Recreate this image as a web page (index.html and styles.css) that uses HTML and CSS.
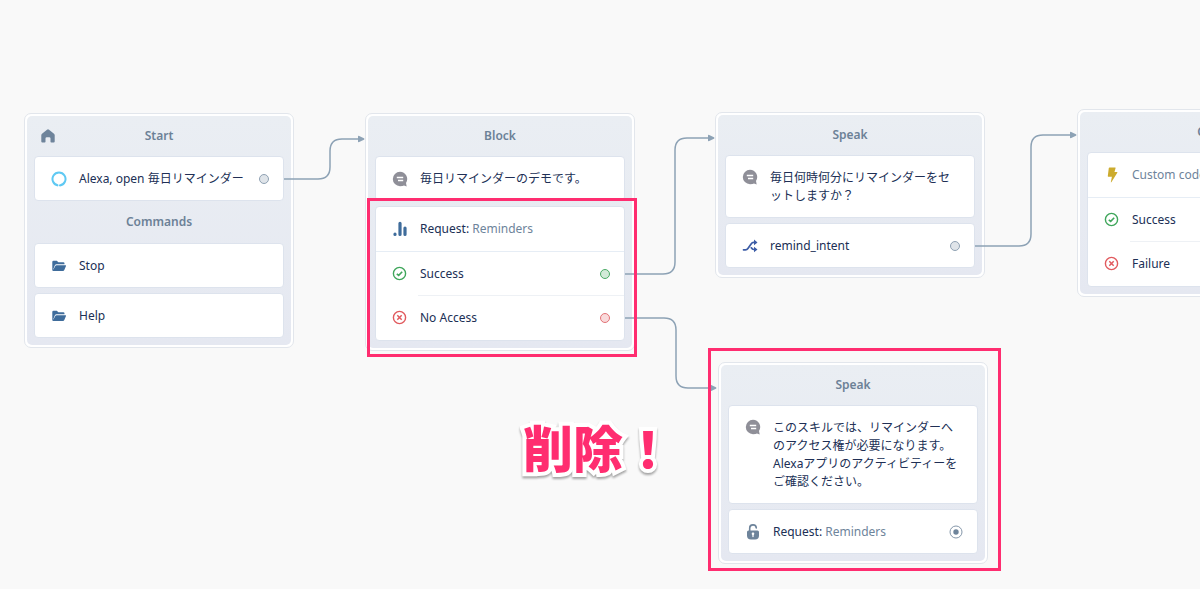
FILE: index.html
```
<!DOCTYPE html>
<html lang="ja">
<head>
  <meta charset="utf-8">
  <title>Skill Canvas</title>
  <link rel="stylesheet" href="styles.css">
</head>
<body>
  <!-- shared icons -->
  <svg class="defs" aria-hidden="true">
    <symbol id="speak" viewBox="0 0 16 16">
      <path fill="#8f8f98" d="M8 .800a7.200 7.200 0 1 0 0 14.400q3 0 4-.6l2.700.9-.7-3.600A7.200 7.200 0 0 0 8 .800z"/>
      <path stroke="#fff" stroke-width="1.500" d="M4.800 6.500h6.400M6 9.500h5.200"/>
    </symbol>
    <symbol id="folder" viewBox="0 0 16 16">
      <path fill="#3f6c9b" d="M1.300 12V4q0-1.200 1.200-1.200h3.300l1.500 1.500h5q1.200 0 1.200 1.200v.7H5.500q-1 0-1.500.9L2.300 11v.8L4.300 8q.3-.7 1.200-.7h9q.8 0 .5.800l-1.700 4q-.4.900-1.300.9H2.300q-1 0-1-1z"/>
    </symbol>
    <symbol id="ok" viewBox="0 0 16 16">
      <g fill="none" stroke="#3fa65b" stroke-width="1.400"><circle cx="7.500" cy="7.500" r="6.100"/><path stroke-width="1.600" d="M4.800 7.800l1.900 1.600 3.500-3.600"/></g>
    </symbol>
    <symbol id="fail" viewBox="0 0 16 16">
      <g fill="none" stroke="#e15a5e" stroke-width="1.400"><circle cx="7.500" cy="7.500" r="6.100"/><path stroke-width="1.500" d="M5.300 5.300l4.400 4.400M9.700 5.300l-4.400 4.400"/></g>
    </symbol>
  </svg>

  <main class="canvas">
    <section class="node node-start">
      <div class="node-body">
        <h2>
          <svg class="home" viewBox="0 0 16 16"><path fill="#6e849b" d="M8 1.300q.5 0 1 .4l5 4q.7.600.7 1.400v6.400q0 1-1 1h-2.400q-.8 0-.8-.8V10.500q0-1.300-1.300-1.300H6.800q-1.300 0-1.300 1.300v3.200q0 .8-.8.800H2.300q-1 0-1-1V7.100q0-.8.7-1.400l5-4q.5-.4 1-.4z"/></svg>
          Start
        </h2>
        <div class="card">
          <div class="row">
            <svg class="icon" viewBox="0 0 16 16"><path fill="none" stroke="#5fc9f3" stroke-width="2" d="M7.200 14.400a6.500 6.500 0 1 1 1.600 0l-.5.600"/></svg>
            <span class="text">Alexa, open 毎日リマインダー</span>
            <span class="port"></span>
          </div>
        </div>
        <h3>Commands</h3>
        <div class="card">
          <div class="row"><svg class="icon"><use href="#folder"/></svg><span class="text">Stop</span></div>
        </div>
        <div class="card">
          <div class="row"><svg class="icon"><use href="#folder"/></svg><span class="text">Help</span></div>
        </div>
      </div>
    </section>

    <section class="node node-block">
      <div class="node-body">
        <h2>Block</h2>
        <div class="card">
          <div class="row"><svg class="icon"><use href="#speak"/></svg><span class="text">毎日リマインダーのデモです。</span></div>
        </div>
        <div class="card">
          <div class="row first">
            <svg class="icon" viewBox="0 0 16 16"><path fill="none" stroke="#3f6c9b" stroke-width="3.200" stroke-linecap="round" d="M3 13.200v.300M8 2.300v11.200M13 7v6.500"/></svg>
            <span class="text">Request: <span class="muted">Reminders</span></span>
          </div>
          <div class="row line"><svg class="icon"><use href="#ok"/></svg><span class="text">Success</span><span class="port green"></span></div>
          <div class="row line-short"><svg class="icon"><use href="#fail"/></svg><span class="text">No Access</span><span class="port red"></span></div>
        </div>
      </div>
    </section>

    <section class="node node-speak">
      <div class="node-body">
        <h2>Speak</h2>
        <div class="card">
          <div class="row tall"><svg class="icon"><use href="#speak"/></svg><span class="text">毎日何時何分にリマインダーをセ<br>ットしますか？</span></div>
        </div>
        <div class="card">
          <div class="row">
            <svg class="icon" viewBox="0 0 16 16"><path fill="none" stroke="#3c5ca6" stroke-width="1.700" stroke-linecap="round" stroke-linejoin="round" d="M1.500 11.800h2q1.500 0 2.400-1.300l3.200-4.600q1-1.500 2.600-1.500h1.800M9.300 9.800q1 1.700 2.500 1.700h1.700"/><path fill="#3c5ca6" d="M12 1.600l3.500 2.800L12 7.200zM12 8.700l3.500 2.800-3.500 2.800z"/></svg>
            <span class="text">remind_intent</span>
            <span class="port"></span>
          </div>
        </div>
      </div>
    </section>

    <section class="node node-code">
      <div class="node-body">
        <h2>Code</h2>
        <div class="card">
          <div class="row first">
            <svg class="icon" viewBox="0 0 16 16"><path fill="#ccab2e" d="M5.500.500h5.700q.6 0 .4.600L10.500 5H13q.7 0 .3.700L7.500 15q-.8 1-.6-.3l1-5H4.300q-.6 0-.5-.600l1-8q.1-.6.700-.6z"/></svg>
            <span class="text muted">Custom code</span>
          </div>
          <div class="row line"><svg class="icon"><use href="#ok"/></svg><span class="text">Success</span><span class="port green"></span></div>
          <div class="row line-short"><svg class="icon"><use href="#fail"/></svg><span class="text">Failure</span><span class="port red"></span></div>
        </div>
      </div>
    </section>

    <section class="node node-permission">
      <div class="node-body">
        <h2>Speak</h2>
        <div class="card">
          <div class="row tall"><svg class="icon"><use href="#speak"/></svg><span class="text">このスキルでは、リマインダーへ<br>のアクセス権が必要になります。<br>Alexaアプリのアクティビティーを<br>ご確認ください。</span></div>
        </div>
        <div class="card">
          <div class="row">
            <svg class="icon" viewBox="0 0 16 16"><path fill="none" stroke="#6e849b" stroke-width="1.600" stroke-linecap="round" d="M4.700 7V4.300a3.300 3.300 0 0 1 6.600-.3"/><path fill="#6e849b" d="M3.500 6.500h9q1.500 0 1.500 1.500v3.500q0 4-4 4H6q-4 0-4-4V8q0-1.500 1.500-1.500z"/><path stroke="#fff" stroke-width="1.300" stroke-linecap="round" d="M8 9.500v3"/><circle cx="8" cy="9.700" r="1.300" fill="#fff"/></svg>
            <span class="text">Request: <span class="muted">Reminders</span></span>
            <svg class="target" viewBox="0 0 14 14"><circle cx="7" cy="7" r="6" fill="none" stroke="#8597aa"/><circle cx="7" cy="7" r="2.700" fill="#6e849b"/></svg>
          </div>
        </div>
      </div>
    </section>

    <svg class="links" aria-hidden="true">
      <defs>
        <marker id="arrow" viewBox="0 0 7 8" markerWidth="7" markerHeight="8" refX="5" refY="4" markerUnits="userSpaceOnUse">
          <path fill="#8da2b5" d="M0 1.500q0-1 1.200-.6L6 3.300q1 .7 0 1.400L1.200 7.100Q0 7.500 0 6.500z"/>
        </marker>
      </defs>
      <path d="M284 179H318Q330 179 330 167V151Q330 139 342 139H363"/>
      <path d="M625 274H663Q675 274 675 262V150Q675 138 687 138H713"/>
      <path d="M625 318H664Q676 318 676 330V376Q676 388 688 388H715"/>
      <path d="M975 246H1019Q1031 246 1031 234V147Q1031 135 1043 135H1075"/>
    </svg>

    <div class="mark mark-request"></div>
    <div class="mark mark-permission"></div>
    <strong class="note">削除！</strong>
  </main>
</body>
</html>
```
FILE: styles.css
```
* {
  box-sizing: border-box;
}

body {
  margin: 0;
  background: #f9f9f9;
  color: #202f55;
  font-family: "Noto Sans", "Noto Sans CJK JP", sans-serif;
  font-size: 12px;
  line-height: 18px;
}

.defs {
  position: absolute;
  width: 0;
  height: 0;
}

.canvas {
  position: relative;
  height: 100vh;
  overflow: hidden;
}

.links {
  position: absolute;
  width: 100%;
  height: 100%;
}

.links > path {
  fill: none;
  stroke: #8da2b5;
  stroke-width: 1.5px;
  marker-end: url(#arrow);
}

/* nodes */
.node {
  position: absolute;
  width: 270px;
  padding: 2px;
  border: 1px solid #e2e6ec;
  border-radius: 7px;
  background: #fff;
}

.node-start { left: 24px; top: 113px; }
.node-block { left: 365px; top: 113px; }
.node-speak { left: 715px; top: 112px; }
.node-code { left: 1077px; top: 109px; }
.node-permission { left: 718px; top: 362px; }

.node-body {
  display: flex;
  flex-direction: column;
  gap: 5px;
  padding: 0 7px 7px;
  border-radius: 5px;
  background: linear-gradient(#eaeef3, #e5e8f1);
}

h2,
h3 {
  position: relative;
  margin: 0;
  color: #6c8197;
  font-size: 12px;
  font-weight: 600;
  text-align: center;
}

h2 {
  padding: 11px 0 6px;
}

h3 {
  padding: 7px 0;
}

.home {
  position: absolute;
  left: 6px;
  top: 12px;
  width: 16px;
  height: 16px;
}

.card {
  border: 1px solid #dde3ed;
  border-radius: 4px;
  background: #fff;
}

.row {
  display: flex;
  align-items: center;
  height: 43px;
  padding: 0 14px 0 16px;
}

.tall {
  align-items: flex-start;
  height: auto;
  padding-top: 13px;
  padding-bottom: 12px;
}

.first {
  height: 44px;
}

.line {
  height: 44px;
  border-top: 1px solid #e6edf5;
}

.line-short {
  height: 45px;
  background: linear-gradient(#eef1f5, #eef1f5) 42px 0 / 100% 1px no-repeat;
}

.icon {
  flex: none;
  width: 16px;
  height: 16px;
  margin-right: 12px;
}

.text {
  flex: 1;
  white-space: nowrap;
}

.muted {
  color: #6e849b;
}

.port {
  width: 10px;
  height: 10px;
  border: 1px solid #8fa1b3;
  border-radius: 50%;
  background: #dfe4e9;
}

.green {
  border-color: #4cab67;
  background: #d2ead8;
}

.red {
  border-color: #e27377;
  background: #f9dadb;
}

.target {
  width: 14px;
  height: 14px;
}

/* annotations */
.mark {
  position: absolute;
  border: 3px solid #ff2d70;
}

.mark-request {
  left: 367px;
  top: 198px;
  width: 270px;
  height: 159px;
}

.mark-permission {
  left: 708px;
  top: 348px;
  width: 293px;
  height: 223px;
}

.note {
  position: absolute;
  left: 523px;
  top: 416px;
  color: #ff2d70;
  font-family: "Noto Sans CJK JP", sans-serif;
  font-size: 50px;
  font-weight: 900;
  line-height: 60px;
  paint-order: stroke fill;
  -webkit-text-stroke: 8px #fff;
  filter: drop-shadow(0 2px 1px rgba(0, 0, 0, 0.35));
}
```
